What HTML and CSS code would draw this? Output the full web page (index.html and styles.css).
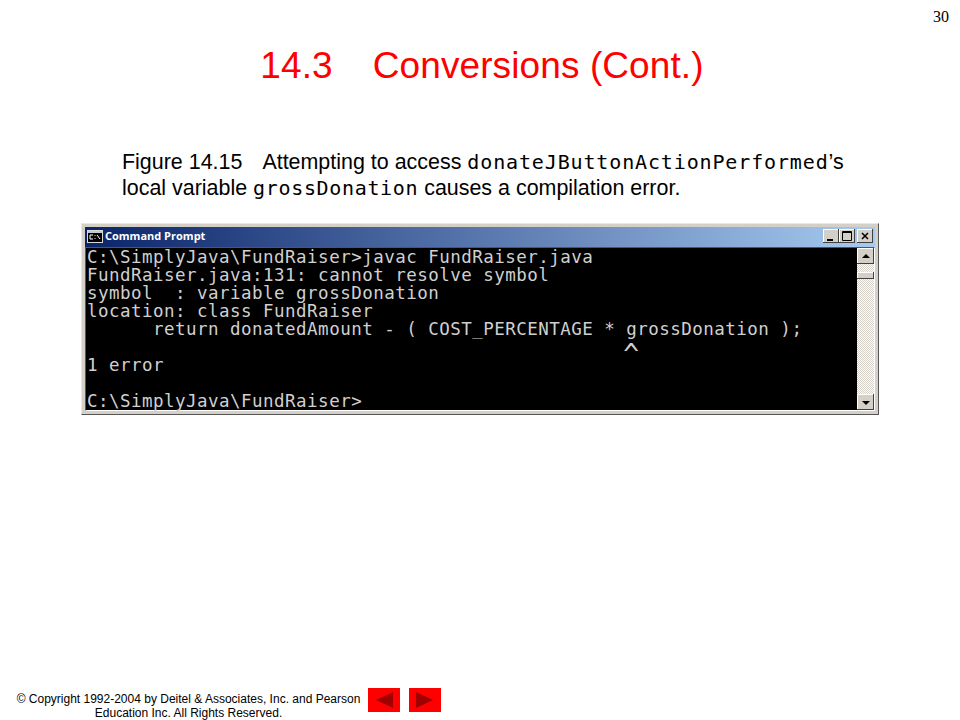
FILE: index.html
```html
<!DOCTYPE html>
<html lang="en">
<head>
<meta charset="utf-8">
<title>14.3 Conversions (Cont.)</title>
<link rel="stylesheet" href="styles.css">
</head>
<body>
<div class="slide">
  <div class="page-no">30</div>
  <h1 class="title"><span class="title-num">14.3</span>Conversions (Cont.)</h1>
  <p class="caption">
    <span class="fig">Figure 14.15</span>Attempting to access <code class="mono mono-wide">donateJButtonActionPerformed</code>’s<br>
    local variable <code class="mono">grossDonation</code> causes a compilation error.
  </p>
  <div class="window">
    <div class="titlebar">
      <svg class="app-icon" width="16" height="13" viewBox="0 0 16 13"><rect x="0.5" y="0.5" width="15" height="12" fill="#000" stroke="#d8d8d8"/><rect x="1" y="1" width="14" height="2" fill="#c8c8c8"/><path d="M6 5H3v4h3M8 5v.8M8 8v.8M10 5l3 4" fill="none" stroke="#fff"/></svg>
      <span class="win-title">Command Prompt</span>
      <div class="win-buttons">
        <span class="wbtn"><svg width="16" height="14" viewBox="0 0 16 14"><rect x="4" y="10" width="6" height="2" fill="#000"/></svg></span>
        <span class="wbtn"><svg width="16" height="14" viewBox="0 0 16 14"><path d="M3.5 2.5h9v9h-9z M3.5 3.5h9" fill="none" stroke="#000"/></svg></span>
        <span class="wbtn wbtn-close"><svg width="16" height="14" viewBox="0 0 16 14"><path d="M5 4l6 6M11 4l-6 6" fill="none" stroke="#000" stroke-width="1.5"/></svg></span>
      </div>
    </div>
    <div class="client">
<pre class="console">C:\SimplyJava\FundRaiser&gt;javac FundRaiser.java
FundRaiser.java:131: cannot resolve symbol
symbol  : variable grossDonation
location: class FundRaiser
      return donatedAmount - ( COST_PERCENTAGE * grossDonation );
                                                 <span class="caret">^</span>
1 error

C:\SimplyJava\FundRaiser&gt;</pre>
      <div class="scrollbar">
        <span class="sbtn"><svg width="14" height="14" viewBox="0 0 14 14"><path d="M3 9h8L7 5z" fill="#000"/></svg></span>
        <span class="thumb"></span>
        <span class="track"></span>
        <span class="sbtn"><svg width="14" height="14" viewBox="0 0 14 14"><path d="M3 6h8L7 10z" fill="#000"/></svg></span>
      </div>
    </div>
  </div>
  <div class="footer">
    <p class="copyright">© Copyright 1992-2004 by Deitel &amp; Associates, Inc. and Pearson<br>Education Inc. All Rights Reserved.</p>
    <div class="nav">
      <svg width="32" height="24" viewBox="0 0 32 24"><rect width="32" height="24" fill="#ff0000"/><path d="M8 12L25 4v16z" fill="#a00000"/></svg>
      <svg width="32" height="24" viewBox="0 0 32 24"><rect width="32" height="24" fill="#ff0000"/><path d="M24 12L7 4v16z" fill="#a00000"/></svg>
    </div>
  </div>
</div>
</body>
</html>
```
FILE: styles.css
```css
html, body {
  margin: 0;
  padding: 0;
  background: #fff;
}
.slide {
  width: 960px;
  height: 720px;
  position: relative;
  overflow: hidden;
  font-family: "Liberation Sans", Arial, sans-serif;
  color: #000;
  display: flex;
  flex-direction: column;
}
.page-no {
  position: absolute;
  top: 9px;
  right: 11px;
  font: 16px/16px "Liberation Serif", serif;
}
.title {
  margin: 44px 0 0;
  padding-left: 4px;
  font-size: 37px;
  line-height: 43px;
  letter-spacing: 0.1px;
  font-weight: 400;
  color: #ff0000;
  text-align: center;
}
.title-num {
  margin-right: 40px;
}
.caption {
  margin: 62px 0 0 122px;
  font-size: 21.45px;
  line-height: 26px;
  color: #000;
  white-space: nowrap;
}
.fig {
  margin-right: 20px;
}
.mono {
  font-family: "DejaVu Sans Mono", monospace;
  font-size: 20px;
  line-height: 20px;
  letter-spacing: 0.66px;
}
.mono-wide {
  letter-spacing: 0.86px;
}
.window {
  margin: 22px 0 0 81px;
  width: 798px;
  height: 192px;
  box-sizing: border-box;
  background: #d4d0c8;
  border: 1px solid #e8e8e8;
  border-right-color: #555;
  border-bottom-color: #555;
  padding: 3px;
  display: flex;
  flex-direction: column;
}
.titlebar {
  height: 20px;
  flex: none;
  display: flex;
  align-items: center;
  gap: 3px;
  padding: 0 2px;
  background: linear-gradient(90deg, #0a246a 0%, #a6caf0 100%);
}
.app-icon {
  margin-bottom: 2px;
}
.win-title {
  color: #fff;
  font: 700 11px/14px "Open Sans", "DejaVu Sans", sans-serif;
  margin: 0 0 2px -1px;
}
.win-buttons {
  margin-left: auto;
  margin-bottom: 2px;
  display: flex;
  gap: 0;
}
.wbtn {
  width: 16px;
  height: 14px;
  background: #d4d0c8;
  box-shadow: inset -1px -1px 0 #404040, inset 1px 1px 0 #fff;
  display: block;
}
.wbtn svg, .sbtn svg {
  display: block;
}
.wbtn-close {
  margin-left: 2px;
}
.client {
  flex: 1;
  min-height: 0;
  display: flex;
  border: 1px solid #555;
  border-right-color: #fff;
  border-bottom-color: #fff;
  background: #000;
}
.console {
  flex: 1;
  margin: 0;
  padding: 0 0 0 1px;
  background: #000;
  color: #d0d0d0;
  font-family: "DejaVu Sans Mono", monospace;
  font-size: 17.5px;
  letter-spacing: 0.47px;
  line-height: 18px;
}
.caret {
  display: inline-block;
  transform-origin: top;
  transform: translateY(2px) scale(1.5, 1.6);
}
.scrollbar {
  width: 17px;
  flex: none;
  display: flex;
  flex-direction: column;
  background: repeating-conic-gradient(#d4d0c8 0 25%, #fff 0 50%) 0 0 / 2px 2px;
}
.sbtn {
  height: 16px;
  flex: none;
  background: #d4d0c8;
  box-shadow: inset -1px -1px 0 #404040, inset 1px 1px 0 #fff;
  padding: 1px 1px 0 2px;
  box-sizing: border-box;
}
.thumb {
  height: 7px;
  margin-top: 8px;
  flex: none;
  background: #d4d0c8;
  box-shadow: inset -1px -1px 0 #404040, inset 1px 1px 0 #fff;
}
.track {
  flex: 1;
}
.footer {
  position: absolute;
  left: 0;
  right: 0;
  bottom: 0;
  display: flex;
  align-items: flex-start;
}
.copyright {
  margin: 0 0 0 16px;
  width: 345px;
  box-sizing: border-box;
  font-size: 12px;
  line-height: 14px;
  height: 33px;
  padding-top: 5px;
  text-align: center;
  white-space: nowrap;
}
.nav {
  margin: 1px 0 0 7px;
  display: flex;
  gap: 9px;
}
.nav svg {
  display: block;
}
```
